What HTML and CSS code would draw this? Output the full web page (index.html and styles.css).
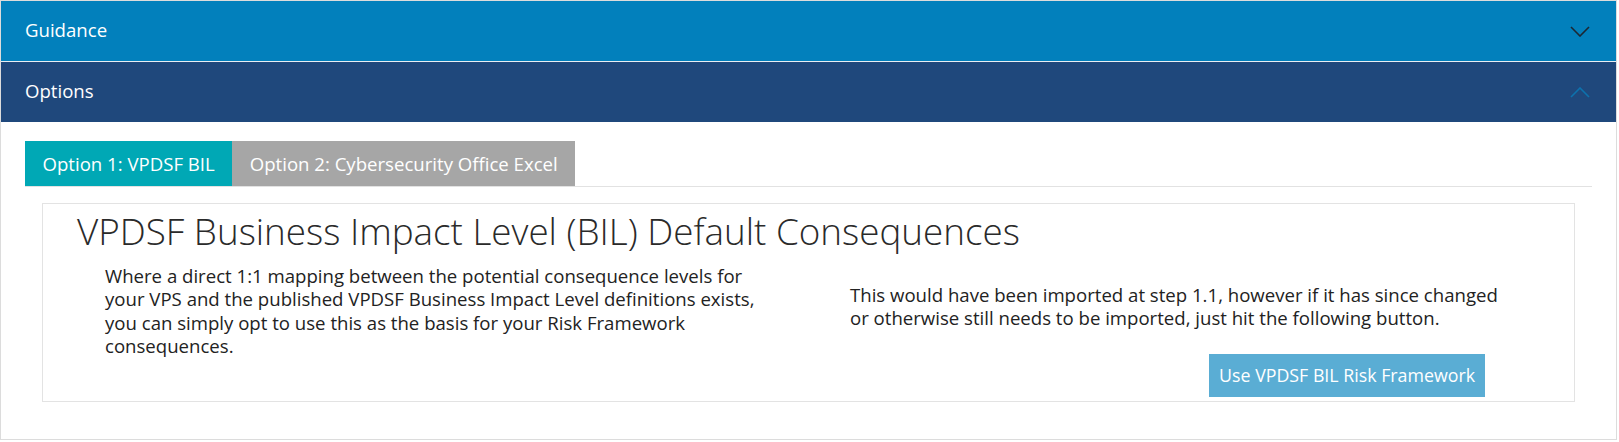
FILE: index.html
```html
<!DOCTYPE html>
<html lang="en">
<head>
    <meta charset="UTF-8">
    <meta name="viewport" content="width=device-width, initial-scale=1.0">
    <title>Risk Framework - Consequences</title>
    <link rel="stylesheet" href="styles.css">
</head>
<body>

<div class="accordion">
    <div class="acc-header guidance">
        <span>Guidance</span>
        <svg class="chevron" width="20" height="11" viewBox="0 0 20 11">
            <polyline points="1,1 10,10 19,1" fill="none" stroke="#1c2733" stroke-width="1.6"/>
        </svg>
    </div>
    <div class="acc-header options">
        <span>Options</span>
        <svg class="chevron" width="20" height="11" viewBox="0 0 20 11">
            <polyline points="1,10 10,1 19,10" fill="none" stroke="#0d72ad" stroke-width="1.6"/>
        </svg>
    </div>

    <div class="acc-body">
        <ul class="tabs">
            <li class="tab active">Option 1: VPDSF BIL</li>
            <li class="tab">Option 2: Cybersecurity Office Excel</li>
        </ul>

        <div class="panel">
            <h2 class="panel-title">VPDSF Business Impact Level (BIL) Default Consequences</h2>
            <div class="cols">
                <div class="col-left">
                    <p>Where a direct 1:1 mapping between the potential consequence levels for your VPS and the published VPDSF Business Impact Level definitions exists, you can simply opt to use this as the basis for your Risk Framework consequences.</p>
                </div>
                <div class="col-right">
                    <p>This would have been imported at step 1.1, however if it has since changed or otherwise still needs to be imported, just hit the following button.</p>
                    <div class="actions">
                        <button class="btn-import">Use VPDSF BIL Risk Framework</button>
                    </div>
                </div>
            </div>
        </div>
    </div>
</div>

</body>
</html>
```

FILE: styles.css
```css
body {
    font-family: 'Open Sans', 'Liberation Sans', sans-serif;
    font-size: 18.6px;
    line-height: 23.4px;
    color: #222;
    background-color: #fff;
    margin: 0;
    padding: 0;
}

.accordion {
    margin-right: 2px;
    border: 1px solid #dcdcdc;
}

.acc-header {
    display: flex;
    align-items: center;
    justify-content: space-between;
    height: 60px;
    padding: 0 26px 0 24px;
    color: #fff;
    line-height: 26px;
    box-sizing: border-box;
}

.acc-header span {
    padding-bottom: 2px;
}

.guidance {
    background-color: #0280bc;
    border-bottom: 1px solid #e8eef3;
    height: 61px;
}

.options {
    background-color: #1f487c;
}

.chevron {
    display: block;
}

.acc-body {
    padding: 19px 24px 37px;
}

.tabs {
    list-style-type: none;
    margin: 0;
    padding: 0;
    display: flex;
    border-bottom: 1px solid #e2e2e2;
}

.tab {
    padding: 9.5px 17.5px;
    line-height: 26px;
    color: #fff;
    background-color: #a6a6a6;
}

.tab.active {
    background-color: #00a8b5;
}

.panel {
    margin: 16px 17px 0;
    padding: 8px 0 4px;
    border: 1px solid #e3e3e3;
}

.panel-title {
    margin: 0 0 14px 34px;
    font-size: 36.8px;
    font-weight: 300;
    line-height: 38px;
    color: #2a2a2a;
}

.cols {
    display: grid;
    grid-template-columns: 675px 650px;
    column-gap: 70px;
    padding-left: 62px;
}

.cols p {
    margin: 0;
}

.col-right p {
    margin-top: 19px;
}

.actions {
    display: flex;
    justify-content: flex-end;
    padding-right: 15px;
    margin-top: 24px;
}

.btn-import {
    font-family: inherit;
    font-size: 17.8px;
    line-height: 26px;
    color: #fff;
    background-color: #5aadd4;
    border: none;
    padding: 8.5px 10px;
    cursor: pointer;
}
```
